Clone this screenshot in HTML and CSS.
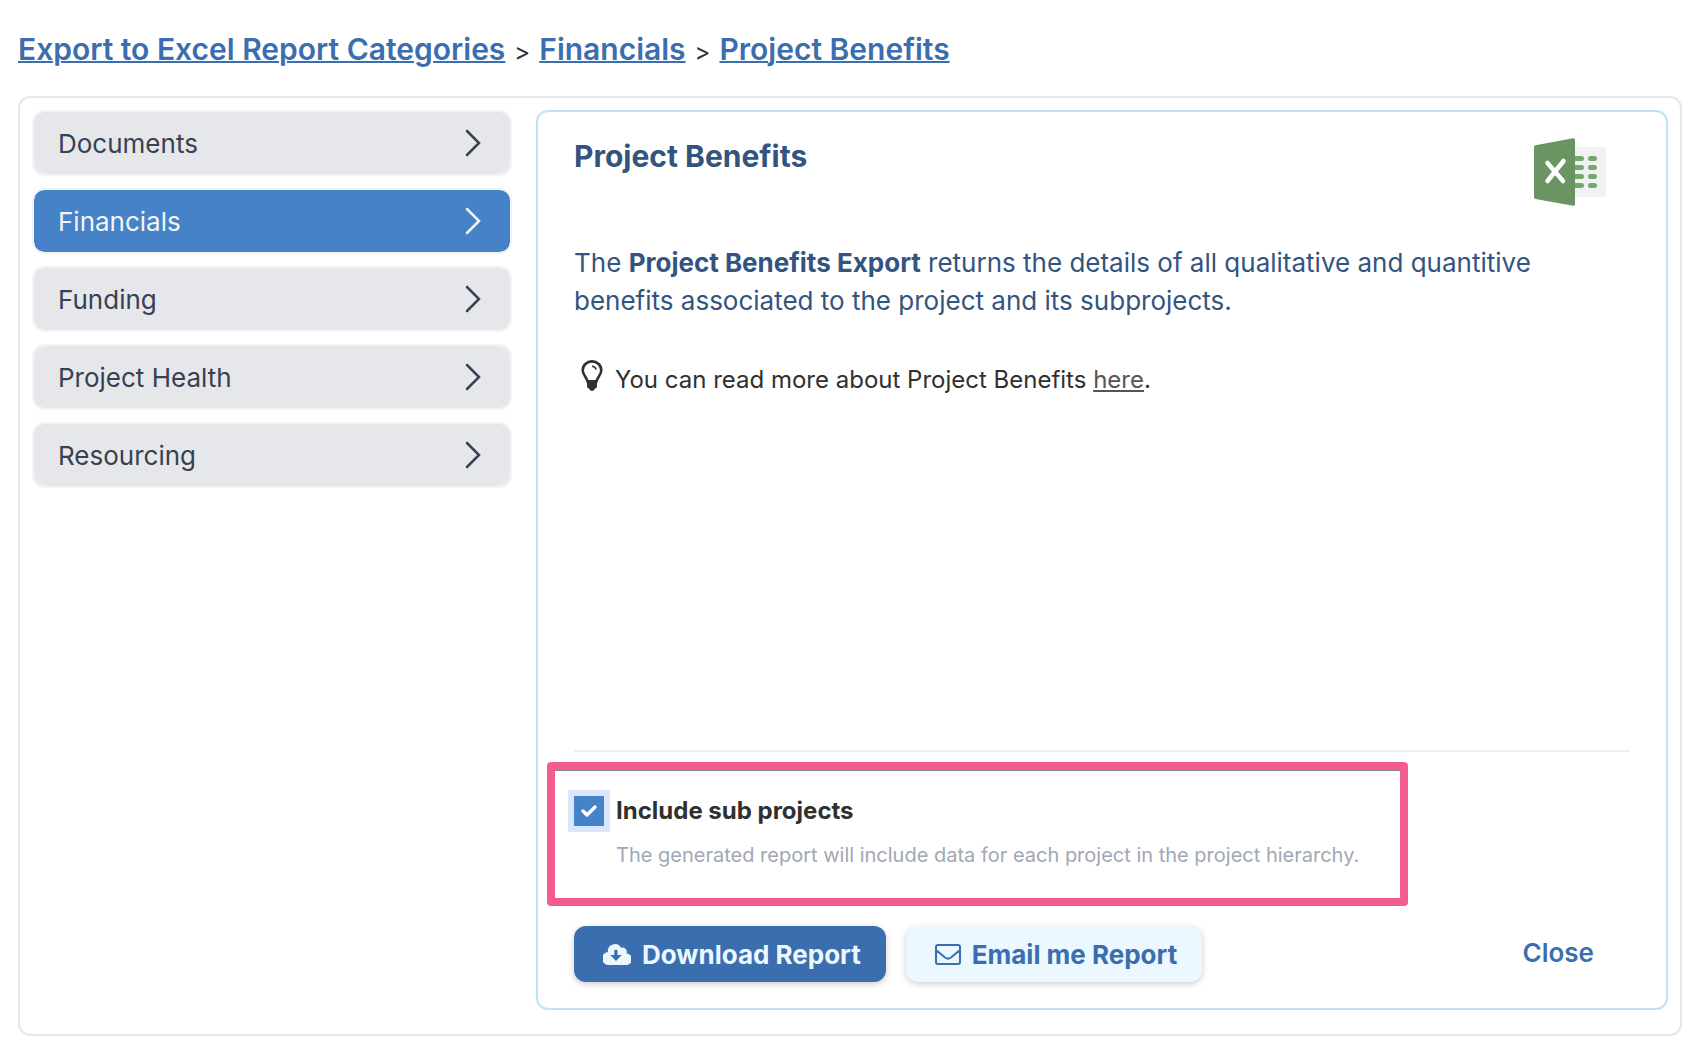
FILE: index.html
```html
<!DOCTYPE html>
<html lang="en">
<head>
  <meta charset="UTF-8" />
  <meta name="viewport" content="width=device-width, initial-scale=1.0"/>
  <title>Project Benefits - Export to Excel</title>
  <link rel="stylesheet" href="styles.css">
</head>
<body>
  <nav class="breadcrumb" aria-label="Breadcrumb">
    <a href="#">Export to Excel Report Categories</a>
    <span>&gt;</span>
    <a href="#">Financials</a>
    <span>&gt;</span>
    <a href="#">Project Benefits</a>
  </nav>
  <main class="wrapper">
    <nav class="categories" aria-label="Categories">
      <a class="category" href="#">Documents<svg class="chevron" viewBox="0 0 16 28"><path d="M2 2l12 12L2 26"/></svg></a>
      <a class="category active" href="#">Financials<svg class="chevron" viewBox="0 0 16 28"><path d="M2 2l12 12L2 26"/></svg></a>
      <a class="category" href="#">Funding<svg class="chevron" viewBox="0 0 16 28"><path d="M2 2l12 12L2 26"/></svg></a>
      <a class="category" href="#">Project Health<svg class="chevron" viewBox="0 0 16 28"><path d="M2 2l12 12L2 26"/></svg></a>
      <a class="category" href="#">Resourcing<svg class="chevron" viewBox="0 0 16 28"><path d="M2 2l12 12L2 26"/></svg></a>
    </nav>
    <section class="panel">
      <div class="panel-header">
        <h1>Project Benefits</h1>
        <svg class="excel-icon" viewBox="0 0 72 68">
          <rect x="36" y="9" width="36" height="50" rx="2" fill="#f0f1f3"/>
          <path d="M40 20.500h7.500M40 29.500h7.500M40 38.500h7.500M40 47.500h7.500M56.500 20.500h4M56.500 29.500h4M56.500 38.500h4M56.500 47.500h4" stroke="#76a86d" stroke-width="5" stroke-linecap="round"/>
          <path d="M1.500 7.200L39 .2q2-.3 2 1.500v64.600q0 1.800-2 1.500L1.500 61Q0 60.600 0 59V9q0-1.500 1.500-1.800z" fill="#6a9462"/>
          <path d="M13.500 25l15.500 18M29.500 23l-16 20" stroke="#fff" stroke-width="4.500" stroke-linecap="round"/>
        </svg>
      </div>
      <p class="description">The <strong>Project Benefits Export</strong> returns the details of all qualitative and quantitive benefits associated to the project and its subprojects.</p>
      <p class="hint">
        <svg class="bulb" viewBox="0 0 22 31">
          <path d="M11 1.400c-5.200 0-9.300 3.900-9.300 8.900 0 4.500 3.900 6.500 4.700 11h9.200c.8-4.500 4.700-6.500 4.700-11 0-5-4.100-8.900-9.300-8.900z" fill="none" stroke="#303030" stroke-width="2.600"/>
          <path d="M11 6.200c2.200.2 3.600 1.300 4.200 3.300" fill="none" stroke="#303030" stroke-width="1.600"/>
          <path d="M6 20.500h10v6.500l-2.500 2.200Q13 31 11 31t-2.500-1.800L6 27z" fill="#303030"/>
        </svg>
        <span>You can read more about Project Benefits <a href="#">here</a>.</span>
      </p>
      <div class="options">
        <div class="highlight">
          <input type="checkbox" id="subProjects" checked>
          <label for="subProjects">Include sub projects</label>
          <p>The generated report will include data for each project in the project hierarchy.</p>
        </div>
      </div>
      <div class="actions">
        <button class="btn btn-primary">
          <svg class="cloud" viewBox="0 0 28 21"><path fill="currentColor" fill-rule="evenodd" d="M23.500 9.200A4.200 4.200 0 0 0 18 3.800 7 7 0 0 0 4.900 7.900 6.300 6.300 0 0 0 6.300 21h16.100a5.600 5.600 0 0 0 1.100-11.800zM11.300 6h3.200v5h4.200L13 17 7.200 11h4.100z"/></svg>
          Download Report
        </button>
        <button class="btn btn-light">
          <svg class="mail" viewBox="0 0 26 21"><path fill="none" stroke="currentColor" stroke-width="2" d="M3 1h20q2 0 2 2v15q0 2-2 2H3q-2 0-2-2V3q0-2 2-2zM1 6l9 7.500q3 2.300 6 0L25 6"/></svg>
          Email me Report
        </button>
        <button class="btn-close">Close</button>
      </div>
    </section>
  </main>
</body>
</html>
```
FILE: styles.css
```css
* { box-sizing: border-box; }
body {
  margin: 0;
  min-height: 100vh;
  padding: 29px 14px 14px 18px;
  display: flex;
  flex-direction: column;
  font-family: Inter, "Liberation Sans", sans-serif;
  font-size: 24px;
  color: #303030;
  background: #fff;
}
h1, p { margin: 0; }
button { font-family: inherit; border: none; cursor: pointer; }

.breadcrumb { display: flex; flex-wrap: wrap; align-items: baseline; gap: 0 9px; line-height: 40px; margin-bottom: 24px; }
.breadcrumb a { color: #3a6eae; font-size: 30px; font-weight: 600; text-decoration-thickness: 2px; }

.wrapper { flex: 1; display: flex; gap: 24px; padding: 12px 12px 24px; border: 2px solid #e5e7eb; border-radius: 12px; }
.categories { width: 480px; flex-shrink: 0; display: flex; flex-direction: column; gap: 12px; }
.category {
  height: 66px;
  padding: 0 29px 0 24px;
  display: flex;
  align-items: center;
  justify-content: space-between;
  font-size: 26px;
  color: #374151;
  text-decoration: none;
  background: #e5e7eb;
  border: 2px solid #f3f4f6;
  border-radius: 12px;
  background-clip: padding-box;
}
.category.active { background-color: #4682c8; color: #f3f4f6; }
.chevron { width: 16px; height: 28px; fill: none; stroke: currentColor; stroke-width: 2.5; stroke-linecap: round; }

.panel { flex: 1; display: flex; flex-direction: column; padding: 26px 36px; border: 2px solid #bee3f8; border-radius: 12px; color: #33547f; }
.panel-header { display: flex; justify-content: space-between; align-items: flex-start; padding-right: 24px; margin-bottom: 38px; }
.panel-header h1 { font-size: 30px; line-height: 36px; font-weight: 700; }
.excel-icon { width: 72px; height: 68px; }
.description { font-size: 26px; line-height: 38px; margin-bottom: 40px; }
.hint { display: flex; gap: 12px; padding-left: 7px; line-height: 40px; color: #303030; }
.hint a { color: #555; }
.bulb { width: 22px; height: 31px; }

.options { margin-top: auto; padding-top: 10px; border-top: 2px solid #eeeff0; }
.highlight {
  width: fit-content;
  margin-left: -27px;
  padding: 21px 41px 25px 19px;
  display: grid;
  grid-template-columns: 30px auto;
  column-gap: 12px;
  row-gap: 6px;
  align-items: center;
  border: 8px solid #f25c8f;
  border-radius: 4px;
  box-shadow: inset 0 1px 0 #888;
}
.highlight input {
  appearance: none;
  width: 30px;
  height: 30px;
  margin: 0;
  background: #4682c8 url('data:image/svg+xml,<svg xmlns="http://www.w3.org/2000/svg" viewBox="0 0 30 30"><path d="M9 15l4 4 8-8" fill="none" stroke="white" stroke-width="3.500" stroke-linecap="round" stroke-linejoin="round"/></svg>');
  box-shadow: 0 0 0 6px #d9e6fc;
}
.highlight label { font-weight: 700; line-height: 40px; color: #303030; }
.highlight p { grid-column: 2; font-size: 20px; line-height: 36px; color: #a0a8b5; }

.actions { display: flex; align-items: center; gap: 20px; margin-top: 20px; }
.btn { height: 56px; padding: 0 25px 0 29px; display: flex; align-items: center; gap: 11px; font-size: 26px; font-weight: 700; border-radius: 12px; box-shadow: 0 2px 6px rgba(0, 0, 0, 0.2); }
.btn-primary { background: #3a6eae; color: #ebf8ff; }
.btn-light { background: #ebf8ff; color: #3a6eae; }
.cloud { width: 28px; height: 21px; }
.mail { width: 26px; height: 21px; }
.btn-close { margin-left: auto; margin-right: 36px; padding: 0 0 4px; background: none; color: #3a6eae; font-size: 26px; font-weight: 600; }
```
